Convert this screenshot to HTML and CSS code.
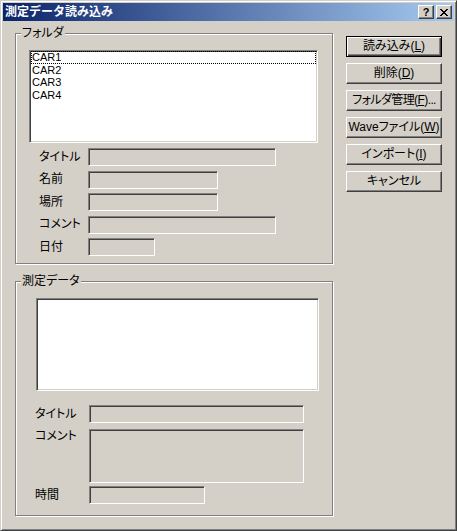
FILE: index.html
```html
<!DOCTYPE html>
<html lang="ja">
<head>
    <meta charset="UTF-8">
    <title>測定データ読み込み</title>
    <link rel="stylesheet" href="styles.css">
</head>
<body>
    <div class="window">
        <div class="titlebar">
            <span class="title">測定データ読み込み</span>
            <div class="caption-buttons">
                <span class="cap-btn help">?</span>
                <span class="cap-btn close">
                    <svg width="8" height="7" viewBox="0 0 8 7">
                        <path d="M0 0h2v1h-2z M6 0h2v1h-2z M1 1h2v1h-2z M5 1h2v1h-2z M2 2h4v1h-4z M3 3h2v1h-2z M2 4h4v1h-4z M1 5h2v1h-2z M5 5h2v1h-2z M0 6h2v1h-2z M6 6h2v1h-2z" fill="#000"/>
                    </svg>
                </span>
            </div>
        </div>

        <div class="client">
            <div class="left">
                <!-- folder group -->
                <div class="group group-folder">
                    <span class="group-label">フォルダ</span>
                    <div class="listbox folder-list">
                        <div class="item focused">CAR1</div>
                        <div class="item">CAR2</div>
                        <div class="item">CAR3</div>
                        <div class="item">CAR4</div>
                    </div>
                    <div class="folder-fields">
                        <span class="label">タイトル</span><span class="edit w-long"></span>
                        <span class="label">名前</span><span class="edit w-mid"></span>
                        <span class="label">場所</span><span class="edit w-mid"></span>
                        <span class="label">コメント</span><span class="edit w-long"></span>
                        <span class="label">日付</span><span class="edit w-short"></span>
                    </div>
                </div>

                <!-- measured data group -->
                <div class="group group-data">
                    <span class="group-label">測定データ</span>
                    <div class="listbox data-list"></div>
                    <div class="row row-title">
                        <span class="label">タイトル</span><span class="edit w-data"></span>
                    </div>
                    <div class="row row-comment">
                        <span class="label label-top">コメント</span><span class="edit w-data memo"></span>
                    </div>
                    <div class="row row-time">
                        <span class="label">時間</span><span class="edit w-time"></span>
                    </div>
                </div>
            </div>

            <div class="buttons">
                <button class="btn default">読み込み(<u>L</u>)</button>
                <button class="btn">削除(<u>D</u>)</button>
                <button class="btn tight">フォルダ管理(<u>F</u>)...</button>
                <button class="btn">Waveファイル(<u>W</u>)</button>
                <button class="btn">インポート(<u>I</u>)</button>
                <button class="btn">キャンセル</button>
            </div>
        </div>
    </div>
</body>
</html>
```

FILE: styles.css
```css
* {
    box-sizing: border-box;
}

body {
    margin: 0;
    background: #d4d0c8;
    font-family: "Liberation Sans", "Noto Sans CJK JP", sans-serif;
    font-size: 12px;
    font-feature-settings: "palt";
    color: #000;
}

/* window frame */
.window {
    width: 457px;
    height: 531px;
    background: #d4d0c8;
    border: 1px solid;
    border-color: #d4d0c8 #404040 #404040 #d4d0c8;
    box-shadow: inset 1px 1px #fff, inset -1px -1px #808080;
    padding: 2px;
}

.titlebar {
    height: 18px;
    margin-bottom: 1px;
    padding: 0 2px 0 2px;
    display: flex;
    align-items: center;
    justify-content: space-between;
    background: linear-gradient(to right, #0a246a, #a6caf0);
}

.title {
    color: #fff;
    font-weight: bold;
    line-height: 14px;
    font-feature-settings: normal;
}

.caption-buttons {
    display: flex;
    gap: 2px;
}

.cap-btn {
    width: 16px;
    height: 14px;
    display: flex;
    align-items: center;
    justify-content: center;
    background: #d4d0c8;
    border: 1px solid;
    border-color: #fff #404040 #404040 #fff;
    box-shadow: inset -1px -1px #808080;
}

.help {
    font-weight: bold;
    font-size: 11px;
    line-height: 11px;
}

.close svg {
    display: block;
}

/* client area */
.client {
    display: flex;
    padding: 11px 0 0 12px;
}

.left {
    width: 318px;
}

.group {
    position: relative;
    border: 1px solid #808080;
    box-shadow: inset 1px 1px #fff, 1px 1px #fff;
}

.group-label {
    position: absolute;
    top: -7px;
    left: 5px;
    padding: 0 1px;
    line-height: 13px;
    background: #d4d0c8;
}

.group-folder {
    height: 231px;
    padding: 16px 0 0 13px;
}

.group-data {
    height: 235px;
    margin-top: 17px;
    padding: 16px 0 0 20px;
}

.listbox {
    background: #fff;
    border: 1px solid;
    border-color: #808080 #fff #fff #808080;
    box-shadow: inset 1px 1px #404040, inset -1px -1px #d4d0c8;
    padding: 0 1px;
}

.folder-list {
    width: 289px;
    height: 93px;
}

.data-list {
    width: 283px;
    height: 93px;
}

.item {
    height: 12.5px;
    line-height: 12.5px;
    font-size: 11px;
    padding-left: 1px;
}

.item.focused {
    outline: 1px dotted #000;
    outline-offset: -1px;
}

.folder-fields {
    display: grid;
    grid-template-columns: 49px auto;
    row-gap: 4.5px;
    margin: 5px 0 0 10px;
    align-items: center;
}

.label {
    line-height: 13px;
}

.edit {
    display: block;
    height: 18px;
    background: #d4d0c8;
    border: 1px solid;
    border-color: #808080 #fff #fff #808080;
    box-shadow: inset 1px 1px #404040, inset -1px -1px #d4d0c8;
}

.w-long { width: 188px; }
.w-mid { width: 130px; }
.w-short { width: 67px; }
.w-data { width: 215px; }
.w-time { width: 116px; }

.memo {
    height: 54px;
}

.row {
    display: flex;
    align-items: center;
    margin-left: -1px;
}

.row .label {
    width: 54px;
}

.row-title { margin-top: 14px; }
.row-comment { margin-top: 6px; align-items: flex-start; }
.row-time { margin-top: 3px; }

.label-top {
    padding-top: 1px;
}

/* push buttons */
.buttons {
    margin: 3px 0 0 13px;
    display: flex;
    flex-direction: column;
    gap: 6px;
}

.btn {
    width: 96px;
    height: 21px;
    padding: 0;
    font: inherit;
    color: #000;
    background: #d4d0c8;
    border: 1px solid;
    border-color: #fff #404040 #404040 #fff;
    box-shadow: inset -1px -1px #808080;
    display: flex;
    align-items: center;
    justify-content: center;
    line-height: 13px;
}

.btn.default {
    border: 1px solid #000;
    box-shadow: inset 1px 1px #fff, inset -1px -1px #404040, inset -2px -2px #808080;
}

.btn.tight {
    letter-spacing: -0.6px;
}
```
